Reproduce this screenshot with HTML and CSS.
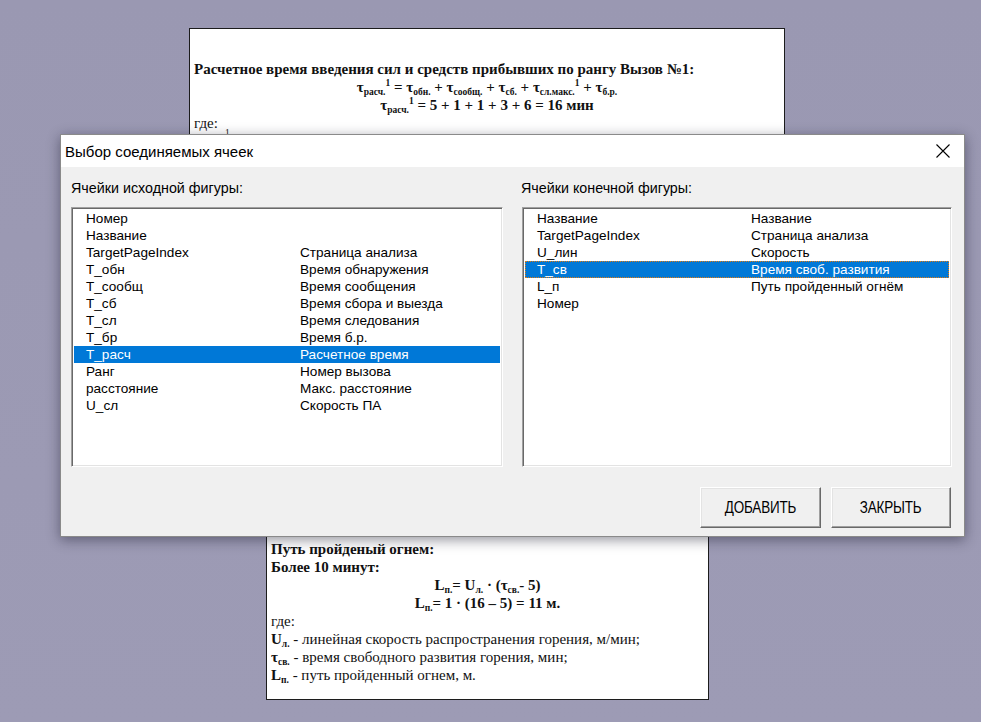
FILE: index.html
```html
<!DOCTYPE html>
<html lang="ru">
<head>
<meta charset="utf-8">
<title>Выбор соединяемых ячеек</title>
<link rel="stylesheet" href="styles.css">
</head>
<body>
<div class="desktop">
  <div class="doc doc-top">
    <div class="doc-line b">Расчетное время введения сил и средств прибывших по рангу Вызов №1:</div>
    <div class="doc-line b center">τ<sub>расч.</sub><sup>1</sup> = τ<sub>обн.</sub> + τ<sub>сообщ.</sub> + τ<sub>сб.</sub> + τ<sub>сл.макс.</sub><sup>1</sup> + τ<sub>б.р.</sub></div>
    <div class="doc-line b center">τ<sub>расч.</sub><sup>1</sup> = 5 + 1 + 1 + 3 + 6 = 16 мин</div>
    <div class="doc-line">где:</div>
    <div class="peek"><span class="peek-sup">1</span></div>
  </div>

  <div class="doc doc-bottom">
    <div class="doc-line b">Путь пройденый огнем:</div>
    <div class="doc-line b">Более 10 минут:</div>
    <div class="doc-line b center">L<sub>п.</sub>= U<sub>л.</sub> · (τ<sub>св.</sub>- 5)</div>
    <div class="doc-line b center">L<sub>п.</sub>= 1 · (16 – 5) = 11 м.</div>
    <div class="doc-line">где:</div>
    <div class="doc-line"><b>U<sub>л.</sub></b> - линейная скорость распространения горения, м/мин;</div>
    <div class="doc-line"><b>τ<sub>св.</sub></b> - время свободного развития горения, мин;</div>
    <div class="doc-line"><b>L<sub>п.</sub></b> - путь пройденный огнем, м.</div>
  </div>

  <div class="dialog">
    <div class="titlebar">
      <span class="title">Выбор соединяемых ячеек</span>
      <span class="close">
        <svg width="14" height="14" viewBox="0 0 14 14"><path d="M0.5 0.5 L13.5 13.5 M13.5 0.5 L0.5 13.5" stroke="#000" stroke-width="1.1" fill="none"/></svg>
      </span>
    </div>
    <div class="dialog-body">
      <div class="columns">
        <div class="col">
          <div class="label">Ячейки исходной фигуры:</div>
          <div class="listbox">
            <div class="row"><span class="c1">Номер</span><span class="c2"></span></div>
            <div class="row"><span class="c1">Название</span><span class="c2"></span></div>
            <div class="row"><span class="c1">TargetPageIndex</span><span class="c2">Страница анализа</span></div>
            <div class="row"><span class="c1">T_обн</span><span class="c2">Время обнаружения</span></div>
            <div class="row"><span class="c1">T_сообщ</span><span class="c2">Время сообщения</span></div>
            <div class="row"><span class="c1">T_сб</span><span class="c2">Время сбора и выезда</span></div>
            <div class="row"><span class="c1">T_сл</span><span class="c2">Время следования</span></div>
            <div class="row"><span class="c1">T_бр</span><span class="c2">Время б.р.</span></div>
            <div class="row sel"><span class="c1">T_расч</span><span class="c2">Расчетное время</span></div>
            <div class="row"><span class="c1">Ранг</span><span class="c2">Номер вызова</span></div>
            <div class="row"><span class="c1">расстояние</span><span class="c2">Макс. расстояние</span></div>
            <div class="row"><span class="c1">U_сл</span><span class="c2">Скорость ПА</span></div>
          </div>
        </div>
        <div class="col">
          <div class="label">Ячейки конечной фигуры:</div>
          <div class="listbox">
            <div class="row"><span class="c1">Название</span><span class="c2">Название</span></div>
            <div class="row"><span class="c1">TargetPageIndex</span><span class="c2">Страница анализа</span></div>
            <div class="row"><span class="c1">U_лин</span><span class="c2">Скорость</span></div>
            <div class="row sel focus"><span class="c1">T_св</span><span class="c2">Время своб. развития</span></div>
            <div class="row"><span class="c1">L_п</span><span class="c2">Путь пройденный огнём</span></div>
            <div class="row"><span class="c1">Номер</span><span class="c2"></span></div>
          </div>
        </div>
      </div>
      <div class="buttons">
        <button class="btn"><span class="btn-text">ДОБАВИТЬ</span></button>
        <button class="btn"><span class="btn-text">ЗАКРЫТЬ</span></button>
      </div>
    </div>
  </div>
</div>
</body>
</html>
```

FILE: styles.css
```css
html, body {
  margin: 0;
  padding: 0;
}
body {
  width: 981px;
  height: 722px;
  overflow: hidden;
  background: #9b99b3;
}
.desktop {
  position: relative;
  width: 981px;
  height: 722px;
  background: linear-gradient(180deg, #9a98b2 0%, #9d9bb5 100%);
}

/* Document fragments */
.doc {
  position: absolute;
  background: #fff;
  border: 1px solid #1c1c1c;
  box-sizing: border-box;
  overflow: hidden;
  font-family: "Liberation Serif", "Times New Roman", serif;
  font-size: 15px;
  color: #111;
}
.doc-top {
  left: 189px;
  top: 28px;
  width: 596px;
  height: 107px;
  padding: 31px 0 0 4px;
}
.doc-bottom {
  left: 266px;
  top: 528px;
  width: 443px;
  height: 172px;
  padding: 11px 0 0 4px;
}
.doc-line {
  line-height: 18px;
  height: 18px;
  white-space: nowrap;
}
.doc-line.b { font-weight: bold; }
.doc-line.center { text-align: center; padding-right: 4px; }
.peek {
  height: 8px;
  line-height: 8px;
  margin-top: -5px;
}
.peek-sup {
  display: inline-block;
  margin-left: 31px;
  font-size: 9.5px;
  line-height: 8px;
}
.doc sub {
  font-size: 9.5px;
  vertical-align: -3px;
  line-height: 0;
}
.doc sup {
  font-size: 9.5px;
  vertical-align: 6px;
  line-height: 0;
}

/* Dialog window */
.dialog {
  position: absolute;
  left: 60px;
  top: 134px;
  width: 905px;
  height: 403px;
  box-sizing: border-box;
  border: 1px solid #8a8a8a;
  background: #f0f0f0;
  box-shadow: 0 3px 12px rgba(20, 20, 40, 0.45);
  display: flex;
  flex-direction: column;
  font-family: "Liberation Sans", Arial, sans-serif;
  color: #000;
}
.titlebar {
  height: 32px;
  background: #fff;
  display: flex;
  align-items: center;
  justify-content: space-between;
  padding: 0 14px 0 4px;
}
.title {
  font-size: 15px;
}
.close {
  display: flex;
  align-items: center;
  width: 14px;
  height: 14px;
}
.dialog-body {
  flex: 1;
  padding: 11px 12px 8px 10px;
  display: flex;
  flex-direction: column;
}
.columns {
  display: grid;
  grid-template-columns: 432px 430px;
  column-gap: 19px;
}
.label {
  font-size: 14.3px;
  height: 20px;
  line-height: 20px;
  margin-bottom: 9px;
}
.columns .col:last-child .label { margin-left: -1px; }
.listbox {
  height: 260px;
  box-sizing: border-box;
  background: #fff;
  border-style: solid;
  border-width: 1px;
  border-color: #a0a0a0 #ffffff #ffffff #a0a0a0;
  box-shadow: inset 1px 1px 0 #696969, inset -1px -1px 0 #e3e3e3;
  padding: 2px;
  font-size: 13.6px;
}
.row {
  height: 17px;
  line-height: 17px;
  display: flex;
  white-space: nowrap;
  box-sizing: border-box;
}
.row .c1 {
  width: 226px;
  padding-left: 12px;
  box-sizing: border-box;
}
.row .c2 {
  flex: 1;
}
.row.sel {
  background: #0078d7;
  color: #fff;
}
.row.focus {
  border: 1px dotted #e07a10;
  line-height: 15px;
}
.row.focus .c1 { padding-left: 11px; width: 225px; }

.buttons {
  margin-top: 20px;
  display: flex;
  justify-content: flex-end;
  gap: 10px;
  padding-right: 1px;
}
.btn {
  height: 41px;
  width: 121px;
  box-sizing: border-box;
  background: #f0f0f0;
  border-style: solid;
  border-width: 1px;
  border-color: #ffffff #696969 #696969 #ffffff;
  box-shadow: inset -1px -1px 0 #a0a0a0, inset 1px 1px 0 #e3e3e3;
  font-family: "Liberation Sans", Arial, sans-serif;
  font-size: 16px;
  color: #000;
  padding: 0;
}
.btn + .btn { width: 120px; }
.btn-text {
  display: inline-block;
  transform: scaleX(0.84);
  letter-spacing: -0.2px;
}
```
